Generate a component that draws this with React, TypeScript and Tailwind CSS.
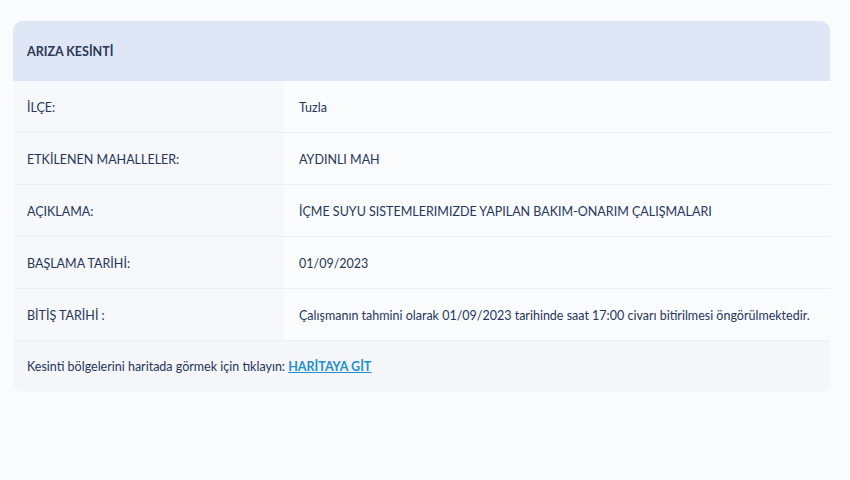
const rows: [string, string][] = [
  ["İLÇE:", "Tuzla"],
  ["ETKİLENEN MAHALLELER:", "AYDINLI MAH"],
  ["AÇIKLAMA:", "İÇME SUYU SISTEMLERIMIZDE YAPILAN BAKIM-ONARIM ÇALIŞMALARI"],
  ["BAŞLAMA TARİHİ:", "01/09/2023"],
  [
    "BİTİŞ TARİHİ :",
    "Çalışmanın tahmini olarak 01/09/2023 tarihinde saat 17:00 civarı bitirilmesi öngörülmektedir.",
  ],
];

export default function App() {
  return (
    <div className="min-h-[480px] w-[850px] bg-[#fafbfd] pt-[21px] pl-[13px] font-['Lato',sans-serif] text-[12.5px] text-[#26355a]">
      <div className="w-[817px] overflow-hidden rounded-[10px] bg-[#f4f6fa]">
        <div className="flex h-[60px] items-center bg-[#dfe7f6] px-[14px] pt-[2px] font-bold text-[#2a3858]">
          ARIZA KESİNTİ
        </div>
        {rows.map(([label, value]) => (
          <div key={label} className="flex h-[52px] border-b border-[#eceff4]">
            <div className="flex w-[271px] items-center bg-[#f6f8fb] px-[14px] pt-[3px]">{label}</div>
            <div className="flex flex-1 items-center bg-[#fbfcfe] px-[15px] pt-[3px]">{value}</div>
          </div>
        ))}
        <div className="flex h-[51px] items-center px-[14px] pt-[2px]">
          Kesinti bölgelerini haritada görmek için tıklayın:&nbsp;
          <a href="#" className="font-bold text-[#1f8fd0] underline">
            HARİTAYA GİT
          </a>
        </div>
      </div>
    </div>
  );
}
